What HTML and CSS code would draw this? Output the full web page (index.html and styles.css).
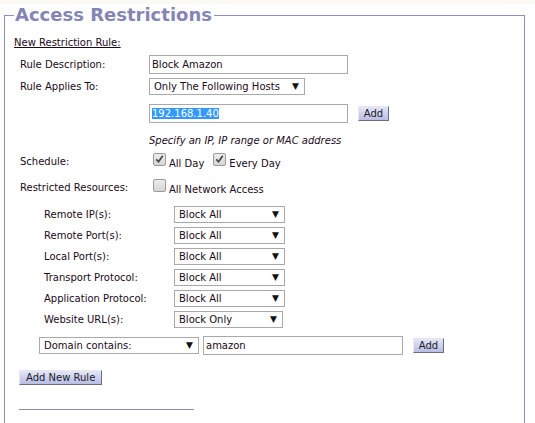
FILE: index.html
```html
<!DOCTYPE html>
<html>
<head>
<meta charset="utf-8">
<link rel="stylesheet" href="styles.css">
</head>
<body>
<div class="topband"></div>
<fieldset class="box">
  <legend class="title">Access Restrictions</legend>
  <div class="subhead">New Restriction Rule:</div>

  <div class="row r-desc">
    <span class="label">Rule Description:</span>
    <span class="field"><span class="input w198">Block Amazon</span></span>
  </div>

  <div class="row r-applies">
    <span class="label">Rule Applies To:</span>
    <span class="field"><span class="select w155">Only The Following Hosts</span></span>
  </div>

  <div class="row r-ip">
    <span class="label"></span>
    <span class="field">
      <span class="input w198"><span class="sel">192.168.1.40</span></span>
      <span class="btn add add1">Add</span>
    </span>
  </div>

  <div class="row r-hint">
    <span class="label"></span>
    <span class="field hint">Specify an IP, IP range or MAC address</span>
  </div>

  <div class="row r-sched">
    <span class="label">Schedule:</span>
    <span class="field">
      <span class="cb checked"><svg viewBox="0 0 12 12" width="12" height="12"><path d="M2.5 6.5 L5 9 L9.5 2.5" fill="none" stroke="#444" stroke-width="1.8"/></svg></span>
      <span class="cbl">All Day</span>
      <span class="cb checked second"><svg viewBox="0 0 12 12" width="12" height="12"><path d="M2.5 6.5 L5 9 L9.5 2.5" fill="none" stroke="#444" stroke-width="1.8"/></svg></span>
      <span class="cbl">Every Day</span>
    </span>
  </div>

  <div class="row r-res">
    <span class="label">Restricted Resources:</span>
    <span class="field">
      <span class="cb"></span>
      <span class="cbl">All Network Access</span>
    </span>
  </div>

  <div class="sub">
    <div class="srow"><span class="slabel">Remote IP(s):</span><span class="select w110">Block All</span></div>
    <div class="srow"><span class="slabel">Remote Port(s):</span><span class="select w110">Block All</span></div>
    <div class="srow"><span class="slabel">Local Port(s):</span><span class="select w110">Block All</span></div>
    <div class="srow"><span class="slabel">Transport Protocol:</span><span class="select w110">Block All</span></div>
    <div class="srow"><span class="slabel">Application Protocol:</span><span class="select w110">Block All</span></div>
    <div class="srow"><span class="slabel">Website URL(s):</span><span class="select w108">Block Only</span></div>
  </div>

  <div class="domain">
    <span class="select w159">Domain contains:</span>
    <span class="input w199">amazon</span>
    <span class="btn add add2">Add</span>
  </div>

  <div class="newrule"><span class="btn">Add New Rule</span></div>

  <div class="rule"></div>
</fieldset>
</body>
</html>
```

FILE: styles.css
```css
* { box-sizing: border-box; }
html, body { margin: 0; padding: 0; background: #fff; }
body {
  font-family: "DejaVu Sans", Verdana, sans-serif;
  font-size: 10px;
  color: #1a0a1a;
  width: 535px;
  height: 423px;
  overflow: hidden;
}
.topband { height: 4px; background: #fbfaf5; }
.box {
  margin: 0 0 0 4px;
  width: 521px;
  height: 440px;
  border: 1px solid #8d8dc0;
  border-bottom: none;
  padding: 0 0 0 9px;
  min-width: 0;
}
.title {
  font-size: 18px;
  font-weight: bold;
  color: #8585b5;
  padding: 0 2px 0 1px;
  margin-left: 0;
  line-height: 22px;
}
.subhead {
  margin-top: 11px;
  text-decoration: underline;
  line-height: 12px;
  height: 14px;
}
.row { display: flex; align-items: center; }
.label { width: 135px; padding-left: 6px; flex: none; }
.field { display: flex; align-items: center; }
.r-desc { height: 19px; margin-top: 4px; }
.r-applies { height: 18px; margin-top: 3px; }
.r-ip { height: 18px; margin-top: 9px; }
.r-hint { height: 14px; margin-top: 11px; }
.r-sched { height: 18px; margin-top: 5px; }
.r-res { height: 18px; margin-top: 8px; }

.input {
  display: inline-block;
  height: 19px;
  border: 1px solid #a9a9a9;
  padding: 0 2px;
  line-height: 17px;
  background: #fff;
  white-space: nowrap;
}
.sel { background: #3399ff; color: #fff; }
.select {
  position: relative;
  display: inline-block;
  height: 17px;
  border: 1px solid #a9a9a9;
  padding: 0 4px;
  line-height: 15px;
  background: #fff;
  white-space: nowrap;
}
.select::after {
  content: "\25BC";
  position: absolute;
  right: 5px;
  top: 0;
  font-size: 9px;
  color: #111;
}
.w198 { width: 199px; }
.w199 { width: 200px; }
.w155 { width: 156px; }
.w110 { width: 111px; }
.w108 { width: 109px; }
.w159 { width: 160px; }

.btn {
  display: inline-block;
  height: 15px;
  line-height: 13px;
  padding: 0 6px;
  border: 1px solid;
  border-color: #e8e8f4 #6d6d80 #6d6d80 #e8e8f4;
  background: linear-gradient(#e4e6f6, #b9bde3);
  color: #1a1a2a;
}
.add { width: 31px; padding: 0; text-align: center; }
.add1 { margin-left: 10px; }

.hint { font-style: italic; }

.cb {
  display: inline-flex;
  align-items: center;
  justify-content: center;
  width: 13px;
  height: 13px;
  border: 1px solid #9a9a9a;
  border-radius: 2px;
  background: linear-gradient(#ececec, #d6d6d6);
  margin-left: 4px;
  margin-top: -4px;
}
.cb svg { display: block; }
.cb.second { margin-left: 9px; }
.cbl { margin-left: 3px; margin-top: 5px; }

.sub { margin-top: 8px; }
.srow { display: flex; align-items: center; height: 21px; }
.slabel { width: 160px; padding-left: 30px; flex: none; white-space: nowrap; }

.domain { display: flex; align-items: center; gap: 4px; margin-top: 6px; padding-left: 25px; height: 18px; }
.domain .add2 { margin-left: 6px; }
.newrule { margin-top: 16px; padding-left: 5px; }
.rule { margin-top: 24px; margin-left: 5px; width: 175px; border-top: 1px solid #8d8dab; }
```
